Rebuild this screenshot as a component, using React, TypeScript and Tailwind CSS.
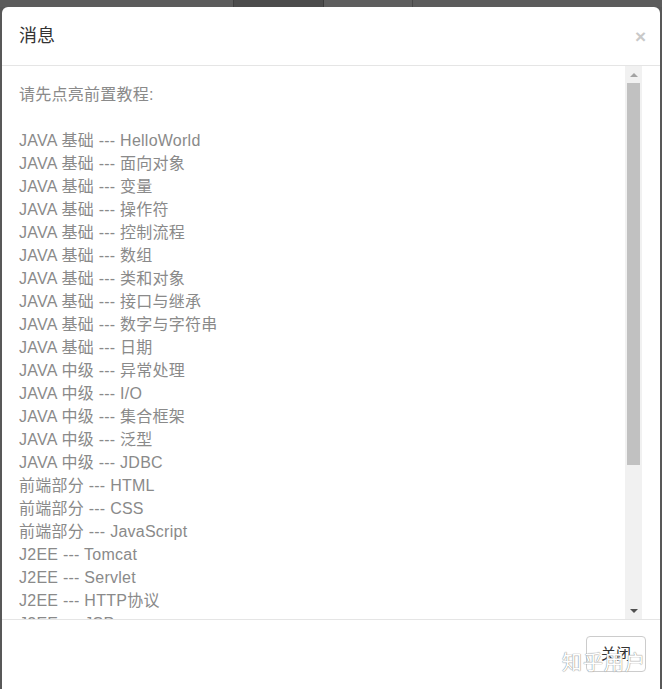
import React from 'react'

const lines = [
  'JAVA 基础 --- HelloWorld',
  'JAVA 基础 --- 面向对象',
  'JAVA 基础 --- 变量',
  'JAVA 基础 --- 操作符',
  'JAVA 基础 --- 控制流程',
  'JAVA 基础 --- 数组',
  'JAVA 基础 --- 类和对象',
  'JAVA 基础 --- 接口与继承',
  'JAVA 基础 --- 数字与字符串',
  'JAVA 基础 --- 日期',
  'JAVA 中级 --- 异常处理',
  'JAVA 中级 --- I/O',
  'JAVA 中级 --- 集合框架',
  'JAVA 中级 --- 泛型',
  'JAVA 中级 --- JDBC',
  '前端部分 --- HTML',
  '前端部分 --- CSS',
  '前端部分 --- JavaScript',
  'J2EE --- Tomcat',
  'J2EE --- Servlet',
  'J2EE --- HTTP协议',
  'J2EE --- JSP',
]

const App: React.FC = () => {
  return (
    <div
      className="relative w-[662px] h-[689px] overflow-hidden bg-[#585858] flex flex-col"
      style={{ fontFamily: '"Liberation Sans", "Noto Sans CJK SC", sans-serif' }}
    >
      {/* page behind the modal */}
      <div className="h-[7px] flex shrink-0">
        <div className="w-[233px] bg-[#5c5c5c]" />
        <div className="w-[1px] bg-[#404040]" />
        <div className="w-[89px] bg-[#4c4c4c]" />
        <div className="w-[1px] bg-[#3c3c3c]" />
        <div className="w-[88px] bg-[#5e5e5e]" />
        <div className="w-[1px] bg-[#484848]" />
        <div className="flex-1 bg-[#5c5c5c]" />
      </div>

      {/* modal */}
      <div className="ml-[2px] w-[658px] flex-1 bg-white rounded-t-[6px] flex flex-col overflow-hidden">
        {/* header */}
        <div className="h-[59px] shrink-0 flex items-center justify-between pl-[17px] pr-[14px] pt-[1px] border-b border-[#e5e5e5]">
          <span className="text-[18px] text-[#333]">消息</span>
          <span className="text-[19px] font-bold text-[#c9c9c9] leading-none">×</span>
        </div>

        {/* body */}
        <div className="h-[553px] shrink-0 flex pl-[17px] pr-[18px]">
          <div className="flex-1 overflow-hidden pt-[17px] text-[16px] leading-[23px] text-[#8a8a8a] tracking-[0.25px]">
            <div>请先点亮前置教程:</div>
            <div className="h-[23px]" />
            {lines.map((l, i) => (
              <div key={i} className="whitespace-nowrap">{l}</div>
            ))}
          </div>

          {/* scrollbar */}
          <div className="w-[17px] bg-[#f1f1f1] flex flex-col items-center">
            <div className="h-[17px] w-full flex items-center justify-center">
              <div className="w-0 h-0 border-l-[4px] border-r-[4px] border-b-[4px] border-l-transparent border-r-transparent border-b-[#a3a3a3]" />
            </div>
            <div className="w-[13px] h-[382px] bg-[#c1c1c1]" />
            <div className="flex-1" />
            <div className="h-[17px] w-full flex items-center justify-center">
              <div className="w-0 h-0 border-l-[4px] border-r-[4px] border-t-[4px] border-l-transparent border-r-transparent border-t-[#505050]" />
            </div>
          </div>
        </div>

        {/* footer */}
        <div className="flex-1 border-t border-[#e5e5e5] flex justify-end items-start pt-[16px] pr-[14px]">
          <button className="w-[60px] h-[36px] border border-[#cccccc] rounded-[4px] bg-white text-[15px] text-[#333]">
            关闭
          </button>
        </div>
      </div>

      {/* watermark */}
      <div className="absolute left-[562px] top-[648px] text-[20px] text-white tracking-[1px] [text-shadow:0_0_1px_#8a8a8a,0_0_1px_#8a8a8a]">
        知乎用户
      </div>
    </div>
  )
}

export default App
